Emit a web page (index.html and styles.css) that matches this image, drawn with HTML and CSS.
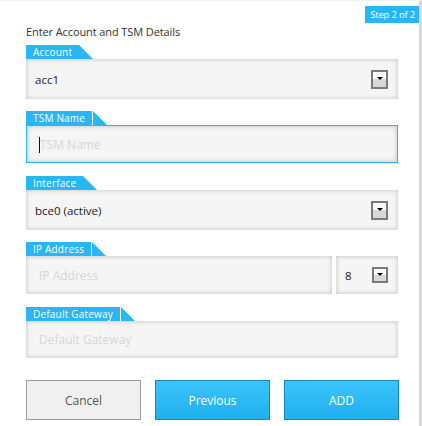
FILE: index.html
```html
<!DOCTYPE html>
<html>
<head>
<meta charset="utf-8">
<link rel="stylesheet" href="styles.css">
</head>
<body>
<div class="page">
  <div class="badge">Step 2 of 2</div>
  <div class="title">Enter Account and TSM Details</div>
  <div class="form">
    <div class="group gap-select">
      <div class="tab"><span class="tab-label">Account</span></div>
      <div class="field select"><span class="value">acc1</span><span class="arrow"><span class="tri"></span></span></div>
    </div>
    <div class="group gap-input">
      <div class="tab split"><span class="tab-label">TSM Name</span></div>
      <div class="field input focused"><span class="caret"></span><input type="text" placeholder="TSM Name"></div>
    </div>
    <div class="group gap-select">
      <div class="tab"><span class="tab-label">Interface</span></div>
      <div class="field select"><span class="value">bce0 (active)</span><span class="arrow"><span class="tri"></span></span></div>
    </div>
    <div class="group gap-input">
      <div class="tab split"><span class="tab-label">IP Address</span></div>
      <div class="row">
        <div class="field input ip"><input type="text" placeholder="IP Address" disabled></div>
        <div class="field select mask"><span class="value">8</span><span class="arrow small"><span class="tri"></span></span></div>
      </div>
    </div>
    <div class="group last">
      <div class="tab split"><span class="tab-label">Default Gateway</span></div>
      <div class="field input dg"><input type="text" placeholder="Default Gateway" disabled></div>
    </div>
    <div class="actions">
      <button class="btn cancel">Cancel</button>
      <button class="btn primary">Previous</button>
      <button class="btn primary">ADD</button>
    </div>
  </div>
</div>
</body>
</html>
```

FILE: styles.css
```css
html, body {
  margin: 0;
  padding: 0;
  background: #ffffff;
}

.page {
  box-sizing: border-box;
  width: 422px;
  height: 426px;
  border-top: 1px solid #f2f2f2;
  border-right: 3px solid #d9d9d9;
  padding: 5px 0 0 26px;
  display: flex;
  flex-direction: column;
  font-family: "Open Sans", "Noto Sans", sans-serif;
}

.badge {
  align-self: flex-end;
  height: 17px;
  line-height: 17px;
  padding: 0 4px 0 5px;
  background: #29b6f6;
  color: #ffffff;
  font-size: 9.5px;
  letter-spacing: -0.2px;
}

.title {
  margin-top: 2px;
  margin-bottom: 6px;
  font-size: 11px;
  line-height: 14px;
  letter-spacing: -0.1px;
  color: #333333;
}

.form {
  width: 372px;
}

.gap-select { margin-bottom: 12px; }
.gap-input { margin-bottom: 13px; }
.last { margin-bottom: 22px; }

.tab {
  display: flex;
  height: 14px;
}

.tab-label {
  background: #29b6f6;
  color: #ffffff;
  font-size: 10px;
  font-weight: 500;
  line-height: 14px;
  letter-spacing: 0.2px;
  padding: 0 7px 0 7px;
}

.tab::after {
  content: "";
  width: 0;
  height: 0;
  border-bottom: 14px solid #29b6f6;
  border-right: 14px solid transparent;
}

.tab.split::after {
  margin-left: 1px;
}

.field {
  box-sizing: border-box;
  background: #f5f5f5;
  box-shadow: inset 0 0 5px rgba(0, 0, 0, 0.22);
  display: flex;
  align-items: center;
  font-size: 11.5px;
  color: #222222;
}

.field.select {
  height: 40px;
  padding: 0 10px 0 9px;
}

.field.input {
  height: 38px;
  position: relative;
}

.field.dg {
  height: 37px;
}

.field.focused {
  border: 1px solid #29b6f6;
}

.field input {
  box-sizing: border-box;
  width: 100%;
  height: 100%;
  border: none;
  outline: none;
  background: transparent;
  padding: 0 0 0 13px;
  font-family: "Open Sans", "Noto Sans", sans-serif;
  font-size: 12px;
  color: #222222;
}

.field input::placeholder {
  color: #d6d6d6;
}

.caret {
  position: absolute;
  left: 12px;
  top: 11px;
  width: 1px;
  height: 16px;
  background: #111111;
}

.arrow {
  box-sizing: border-box;
  margin-left: auto;
  width: 17px;
  height: 19px;
  border: 2px solid #7a7a7a;
  background: linear-gradient(#f8f8f8 0, #f8f8f8 50%, #d8d8d8 50%, #d8d8d8 100%);
  display: flex;
  justify-content: center;
  padding-top: 5px;
}

.arrow.small {
  width: 16px;
  height: 16px;
  padding-top: 4px;
}

.tri {
  width: 0;
  height: 0;
  border-left: 3px solid transparent;
  border-right: 3px solid transparent;
  border-top: 3px solid #000000;
}

.row {
  display: flex;
  gap: 4px;
}

.ip {
  width: 306px;
}

.mask {
  flex: 1;
  height: 38px !important;
}

.actions {
  width: 373px;
  display: grid;
  grid-template-columns: repeat(3, 115px);
  justify-content: space-between;
}

.btn {
  box-sizing: border-box;
  height: 40px;
  font-family: "Open Sans", "Noto Sans", sans-serif;
  font-size: 12px;
  padding: 0;
  cursor: pointer;
}

.btn.cancel {
  background: #f0f0f0;
  border: 1px solid #999999;
  color: #555555;
}

.btn.primary {
  background: linear-gradient(#3cc4fb, #1eb0ef);
  border: 1px solid #1489c0;
  color: #ffffff;
}
```
